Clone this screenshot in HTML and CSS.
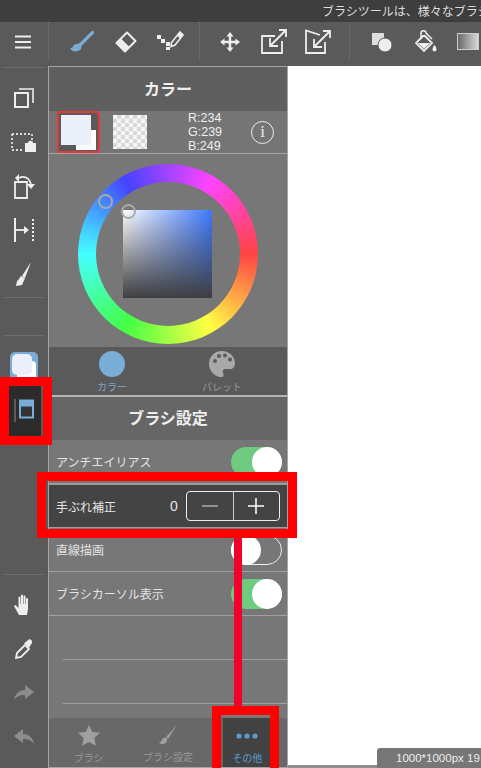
FILE: index.html
```html
<!DOCTYPE html>
<html lang="ja">
<head>
    <meta charset="UTF-8">
    <meta name="viewport" content="width=device-width, initial-scale=1.0">
    <title>ブラシ設定</title>
    <link rel="stylesheet" href="styles.css">
</head>
<body>

    <div class="statusbar">ブラシツールは、様々なブラシを使って描くことができます</div>

    <div class="toolbar">
        <div class="tool-menu">
            <svg width="16" height="14" viewBox="0 0 16 14"><path d="M0 1.500h16M0 7h16M0 12.500h16" stroke="#eee" stroke-width="2"/></svg>
        </div>
        <div class="tool-group group-a">
            <div class="tool">
                <svg width="24" height="22" viewBox="0 0 24 22"><path d="M22.500 1.500 10 14" stroke="#79add8" stroke-width="3.200" stroke-linecap="round"/><path d="M9 13c-3-.5-5 .5-6 2.500-.5 1-1.500 1.800-3 2 2 3.500 8 4 10.500 1 1.500-2 1.500-4.500-1.500-5.500z" fill="#79add8"/></svg>
            </div>
            <div class="tool">
                <svg width="24" height="24" viewBox="0 0 24 24"><path d="M13 2.500 21.500 11 11 21.500 2.500 13z" fill="none" stroke="#eee" stroke-width="2" stroke-linejoin="round"/><path d="M7 8.500 15.500 17 11 21.500 2.500 13z" fill="#eee"/></svg>
            </div>
            <div class="tool">
                <svg width="28" height="24" viewBox="0 0 28 24"><path d="M1 5h4v4H1zM5 9h4v4H5zM10 12h4v4h-4zM10 17h4v3h-4z" fill="#eee"/><path d="M24 2l3 3-8 10-4 1.500 .5-4z" fill="none" stroke="#eee" stroke-width="1.600"/><path d="M24 2l3 3-3 3.500-3-3z" fill="#eee"/></svg>
            </div>
        </div>
        <div class="tool-group group-b">
            <div class="tool">
                <svg width="20" height="20" viewBox="0 0 20 20"><path d="M10 2v16M2 10h16" stroke="#eee" stroke-width="2.400"/><path d="M10 0l3.500 4.500h-7zM10 20l3.500-4.500h-7zM0 10l4.500-3.500v7zM20 10l-4.500-3.500v7z" fill="#eee"/></svg>
            </div>
            <div class="tool">
                <svg width="26" height="25" viewBox="0 0 26 25"><path d="M14 7H1v17h20V12" fill="none" stroke="#eee" stroke-width="1.800"/><path d="M25 1 9.500 16.500M9 9v8h8M18 1h7v7" fill="none" stroke="#eee" stroke-width="1.800"/></svg>
            </div>
            <div class="tool">
                <svg width="26" height="25" viewBox="0 0 26 25"><path d="M15 6 1 1.500V24h19V13" fill="none" stroke="#eee" stroke-width="1.800"/><path d="M24 3 9.500 17.500M9 10v8h8M18 2h7v7" fill="none" stroke="#eee" stroke-width="1.800"/></svg>
            </div>
        </div>
        <div class="tool-group group-c">
            <div class="tool">
                <svg width="20" height="20" viewBox="0 0 20 20"><path d="M0 1h12v12H0z" fill="#ddd"/><circle cx="13" cy="13" r="7" fill="#eee" stroke="#5a5a5a"/></svg>
            </div>
            <div class="tool">
                <svg width="22" height="25" viewBox="0 0 22 25"><path d="M8 7 1 14l8 8 8-8-7-7z" fill="none" stroke="#eee" stroke-width="1.800"/><path d="M3 14h12l-6 6z" fill="#eee"/><path d="M6 10V4c0-3 5-3 5 0l6 6" fill="none" stroke="#eee" stroke-width="1.500"/><path d="M19.500 16c1.500 2 2 3 2 4.500a2 2 0 0 1-4 0c0-1.500.5-2.500 2-4.500z" fill="#eee"/></svg>
            </div>
            <div class="tool">
                <div class="gradient-icon"></div>
            </div>
        </div>
    </div>

    <div class="main">
        <div class="sidebar">
            <div class="side-line"></div>
            <div class="side-item first">
                <svg width="20" height="20" viewBox="0 0 20 20"><path d="M1 5h13v14H1z" fill="none" stroke="#eee" stroke-width="2"/><path d="M5 1h14v14" fill="none" stroke="#eee" stroke-width="1.600"/></svg>
            </div>
            <div class="side-item">
                <svg width="26" height="20" viewBox="0 0 26 20"><path d="M1 2h20M1 18h12M1 2v16M21 2v6" fill="none" stroke="#ddd" stroke-width="1.800" stroke-dasharray="2 2"/><path d="M14 11h11v9H14z" fill="#eee"/><path d="M17 11c0-3 5-3 5 0" fill="#eee"/></svg>
            </div>
            <div class="side-item">
                <svg width="22" height="26" viewBox="0 0 22 26"><path d="M2 9h12v16H2z" fill="none" stroke="#eee" stroke-width="1.800"/><path d="M6 5c5-3 11 0 12 7" fill="none" stroke="#eee" stroke-width="1.800"/><path d="M6 1v8l-4-4zM14 11h8l-4 5z" fill="#eee"/></svg>
            </div>
            <div class="side-item">
                <svg width="22" height="24" viewBox="0 0 22 24"><path d="M2 0v24" stroke="#eee" stroke-width="2"/><path d="M2 12h11" stroke="#eee" stroke-width="1.800"/><path d="M16 12l-5-4v8z" fill="#eee"/><path d="M20 1v22" stroke="#eee" stroke-width="2" stroke-dasharray="2 2"/></svg>
            </div>
            <div class="side-item">
                <svg width="16" height="24" viewBox="0 0 16 24"><path d="M15 0 6 14l3 2z" fill="#eee"/><path d="M5 14c-2 2-2 4-4 5l-1 5 6-1 3-7z" fill="#eee"/></svg>
            </div>
            <div class="side-line line-b"></div>
            <div class="side-line line-c"></div>
            <div class="layer-thumb">
                <div class="layer-front"></div>
                <div class="layer-back"></div>
            </div>
            <div class="panel-btn">
                <svg width="20" height="23" viewBox="0 0 20 23"><path d="M1 0v23" stroke="#8b8b8b" stroke-width="1"/><path d="M6 1.500h13v17H6z" fill="#333" stroke="#79add8" stroke-width="2"/><path d="M6 1.500h13v6H6z" fill="#79add8"/></svg>
            </div>
            <div class="side-spacer"></div>
            <div class="side-line"></div>
            <div class="side-item hand">
                <svg width="20" height="22" viewBox="0 0 20 22"><path d="M5 21 0 12l1.500-1 3 3V3.500a1 1 0 0 1 2 0V10h.5V1.500a1 1 0 0 1 2 0V10h.5V2.500a1 1 0 0 1 2 0V10h.5V5a1 1 0 0 1 2 0v10l-1 6z" fill="#eee"/></svg>
            </div>
            <div class="side-item">
                <svg width="18" height="20" viewBox="0 0 18 20"><path d="M10 6 2 14l-1 5 5-1 8-8z" fill="none" stroke="#eee" stroke-width="1.800"/><path d="M9 4l5 5 1-2 2-3c1-2-2-5-4-3l-2 2z" fill="#eee"/></svg>
            </div>
            <div class="side-item">
                <svg width="20" height="16" viewBox="0 0 20 16"><path d="M11 0l9 7-9 7v-4C6 10 3 11 0 15c1-6 5-10 11-10z" fill="#8d8d8d"/></svg>
            </div>
            <div class="side-item">
                <svg width="20" height="16" viewBox="0 0 20 16"><path d="M9 0 0 7l9 7v-4c5 0 8 1 11 5-1-6-5-10-11-10z" fill="#8d8d8d"/></svg>
            </div>
        </div>

        <div class="panel">
            <div class="panel-title color-title">カラー</div>
            <div class="swatch-row">
                <div class="swatch-frame">
                    <div class="swatch-back"></div>
                    <div class="swatch-main"></div>
                </div>
                <div class="swatch-clear"></div>
                <div class="rgb">R:234<br>G:239<br>B:249</div>
                <div class="info">i</div>
            </div>
            <div class="picker">
                <div class="wheel">
                    <div class="wheel-hole"></div>
                    <div class="square"></div>
                    <div class="ring hue-ring"></div>
                    <div class="ring sat-ring"></div>
                </div>
            </div>
            <div class="color-tabs">
                <div class="color-tab selected">
                    <div class="color-dot"></div>
                    <span>カラー</span>
                </div>
                <div class="color-tab">
                    <svg width="26" height="26" viewBox="0 0 26 26"><path d="M13 0C5 0 0 6 0 13s6 13 12 13c3 0 3-2 2-4s0-4 3-4h4c3 0 5-2 5-6 0-7-6-12-13-12z" fill="#a8a8a8"/><circle cx="6" cy="10" r="2" fill="#5a5a5a"/><circle cx="10" cy="5" r="2" fill="#5a5a5a"/><circle cx="16" cy="4.500" r="2" fill="#5a5a5a"/><circle cx="21" cy="8.500" r="2" fill="#5a5a5a"/></svg>
                    <span>パレット</span>
                </div>
            </div>

            <div class="panel-title brush-title">ブラシ設定</div>
            <div class="row">
                <span>アンチエイリアス</span>
                <div class="toggle on"><div class="knob"></div></div>
            </div>
            <div class="row row-dark">
                <span class="row-label">手ぶれ補正</span>
                <span class="row-value">0</span>
                <div class="stepper">
                    <div class="step">
                        <svg width="16" height="2" viewBox="0 0 16 2"><path d="M0 1h16" stroke="#aaa" stroke-width="1.500"/></svg>
                    </div>
                    <div class="step step-plus">
                        <svg width="16" height="16" viewBox="0 0 16 16"><path d="M0 8h16M8 0v16" stroke="#fff" stroke-width="1.500"/></svg>
                    </div>
                </div>
            </div>
            <div class="row">
                <span>直線描画</span>
                <div class="toggle off"><div class="knob"></div></div>
            </div>
            <div class="row">
                <span>ブラシカーソル表示</span>
                <div class="toggle on"><div class="knob"></div></div>
            </div>
            <div class="row-empty"></div>
            <div class="row-empty"></div>
            <div class="panel-spacer"></div>
            <div class="brush-tabs">
                <div class="brush-tab">
                    <svg width="22" height="21" viewBox="0 0 22 21"><path d="M11 0l3.300 7 7.700.8-5.700 5.200 1.600 7.700L11 16.900l-6.900 3.800 1.600-7.700L0 7.800 7.700 7z" fill="#a0a0a0"/></svg>
                    <span>ブラシ</span>
                </div>
                <div class="brush-tab">
                    <svg width="18" height="20" viewBox="0 0 18 20"><path d="M18 0 7 12l2 2z" fill="#a0a0a0"/><path d="M6 12.500c-3 0-3 3-4 4L0 18c3 2 7 1 8-2 .5-1 0-3-2-3.500z" fill="#a0a0a0"/></svg>
                    <span>ブラシ設定</span>
                </div>
                <div class="brush-tab other">
                    <div class="other-inner">
                        <svg width="22" height="6" viewBox="0 0 22 6"><circle cx="3" cy="3" r="2.600" fill="#5b9bd0"/><circle cx="11" cy="3" r="2.600" fill="#5b9bd0"/><circle cx="19" cy="3" r="2.600" fill="#5b9bd0"/></svg>
                        <span>その他</span>
                    </div>
                </div>
            </div>
        </div>

        <div class="canvas">
            <div class="canvas-info">1000*1000px 19</div>
        </div>
    </div>

    <!-- red marks drawn over the screenshot -->
    <div class="mark mark-side"></div>
    <div class="mark mark-row"></div>
    <div class="mark-line"></div>
    <div class="mark mark-tab"></div>

</body>
</html>
```

FILE: styles.css
```css
* {
    margin: 0;
    padding: 0;
    box-sizing: border-box;
}

body {
    width: 481px;
    height: 768px;
    overflow: hidden;
    position: relative;
    display: flex;
    flex-direction: column;
    font-family: "Noto Sans CJK JP", "Liberation Sans", sans-serif;
    background-color: #5a5a5a;
    color: #eee;
}

.statusbar {
    height: 22px;
    flex: none;
    padding-left: 322px;
    background-color: #3e3e3e;
    font-size: 12px;
    line-height: 22px;
    white-space: nowrap;
    overflow: hidden;
    color: #ddd;
}

.toolbar {
    height: 44px;
    flex: none;
    display: flex;
    background-color: #5a5a5a;
}

.tool-menu {
    width: 49px;
    height: 39px;
    flex: none;
    display: flex;
    align-items: center;
    justify-content: center;
    border-right: 1px solid #6a6a6a;
    padding-right: 3px;
}

.tool-group {
    display: flex;
    flex: none;
    height: 39px;
    border-right: 1px solid #6a6a6a;
}

.group-a {
    width: 151px;
    padding-left: 11px;
}

.group-b {
    width: 150px;
    padding-left: 8px;
}

.group-c {
    width: 131px;
    padding-left: 10px;
    border-right: none;
    overflow: hidden;
}

.tool {
    width: 44px;
    flex: none;
    display: flex;
    align-items: center;
    justify-content: center;
}

.gradient-icon {
    width: 22px;
    height: 17px;
    flex: none;
    margin-right: 4px;
    border: 1px solid #ccc;
    background: linear-gradient(to right, #6a6a6a, #d8d8d8);
}

.main {
    flex: 1;
    display: flex;
    min-height: 0;
}

.sidebar {
    width: 48px;
    flex: none;
    display: flex;
    flex-direction: column;
    align-items: center;
    padding-top: 1px;
    padding-bottom: 9px;
}

.side-line {
    width: 40px;
    height: 1px;
    flex: none;
    background-color: #6e6e6e;
}

.line-b {
    margin-top: 1px;
}

.line-c {
    margin-top: 37px;
}

.side-item {
    height: 44px;
    flex: none;
    display: flex;
    align-items: center;
    justify-content: center;
}

.first {
    margin-top: 8px;
}

.hand {
    margin-top: 8px;
}

.layer-thumb {
    width: 28px;
    height: 30px;
    flex: none;
    position: relative;
    margin-top: 16px;
    border-radius: 5px;
    background-color: #79add8;
}

.layer-front {
    width: 20px;
    height: 21px;
    position: absolute;
    left: 2px;
    top: 2px;
    border-radius: 5px;
    background-color: #eaeff9;
    z-index: 1;
}

.layer-back {
    width: 19px;
    height: 20px;
    position: absolute;
    right: 2px;
    top: 9px;
    border-radius: 4px;
    background-color: #fff;
}

.panel-btn {
    width: 34px;
    height: 51px;
    flex: none;
    margin-top: 4px;
    display: flex;
    align-items: center;
    justify-content: center;
    padding-bottom: 2px;
    background-color: #2b2b2b;
}

.side-spacer {
    flex: 1;
}

.panel {
    width: 240px;
    flex: none;
    display: flex;
    flex-direction: column;
    background-color: #777;
    border-left: 1px solid #a5a5a5;
    border-right: 1px solid #a5a5a5;
    border-top: 1px solid #a5a5a5;
}

.panel-title {
    flex: none;
    text-align: center;
    font-weight: 700;
    font-size: 16px;
    background-color: #5f5f5f;
}

.color-title {
    height: 44px;
    line-height: 42px;
}

.brush-title {
    height: 45px;
    line-height: 41px;
    background-color: #666;
    border-top: 2px solid #b5b5b5;
}

.swatch-row {
    height: 43px;
    flex: none;
    display: flex;
    align-items: center;
    padding-left: 8px;
    background-color: #757575;
    border-bottom: 1px solid #a5a5a5;
}

.swatch-frame {
    width: 43px;
    height: 42px;
    flex: none;
    position: relative;
    border: 2px solid #e0383c;
    border-radius: 3px;
    background-color: #5a5a5a;
}

.swatch-main {
    width: 30px;
    height: 30px;
    position: absolute;
    left: 2px;
    top: 2px;
    background-color: #eaeff9;
}

.swatch-back {
    width: 20px;
    height: 20px;
    position: absolute;
    left: 17px;
    top: 17px;
    background-color: #fff;
}

.swatch-clear {
    width: 34px;
    height: 34px;
    flex: none;
    margin-left: 13px;
    background-color: #f6f6f6;
    background-image: conic-gradient(#d8d8d8 25%, transparent 25% 50%, #d8d8d8 50% 75%, transparent 75%);
    background-size: 8px 8px;
}

.rgb {
    margin-left: 41px;
    width: 63px;
    flex: none;
    font-family: "Liberation Sans", sans-serif;
    font-size: 12.500px;
    line-height: 14px;
}

.info {
    width: 23px;
    height: 23px;
    flex: none;
    border: 1.500px solid #eee;
    border-radius: 50%;
    text-align: center;
    font-family: "Liberation Serif", serif;
    font-size: 17px;
    line-height: 20px;
}

.picker {
    height: 193px;
    flex: none;
    display: flex;
    justify-content: center;
    align-items: center;
    padding-top: 6px;
    background-color: #777;
}

.wheel {
    width: 180px;
    height: 180px;
    position: relative;
    border-radius: 50%;
    background: conic-gradient(from 30deg, #ff44ff, #ff4444 60deg, #ffff44 120deg, #44ff44 180deg, #44ffff 240deg, #4444ff 300deg, #ff44ff 360deg);
}

.wheel-hole {
    width: 144px;
    height: 144px;
    position: absolute;
    left: 18px;
    top: 18px;
    border-radius: 50%;
    background-color: #777;
}

.square {
    width: 89px;
    height: 88px;
    position: absolute;
    left: 45px;
    top: 46px;
    background: linear-gradient(to bottom, transparent, #3f3f42), linear-gradient(to right, #fff, #3c78ff);
}

.ring {
    width: 15px;
    height: 15px;
    position: absolute;
    border: 2px solid #aaa;
    border-radius: 50%;
}

.hue-ring {
    left: 20px;
    top: 30px;
}

.sat-ring {
    left: 43px;
    top: 40px;
}

.color-tabs {
    height: 48px;
    flex: none;
    display: flex;
    padding-left: 8px;
    background-color: #5a5a5a;
}

.color-tab {
    width: 110px;
    display: flex;
    flex-direction: column;
    align-items: center;
    padding-top: 4px;
    font-size: 10px;
    line-height: 14px;
    color: #999;
}

.color-tab span {
    margin-top: 3px;
}

.color-tab.selected {
    color: #7ea6c8;
}

.color-dot {
    width: 26px;
    height: 26px;
    border-radius: 50%;
    background-color: #79add8;
}

.row {
    height: 44px;
    flex: none;
    display: flex;
    align-items: center;
    justify-content: space-between;
    padding: 0 5px 0 7px;
    font-size: 12px;
    color: #e4e4e4;
    border-bottom: 1px solid #a0a0a0;
    background-color: #777;
}

.row-dark {
    justify-content: flex-start;
    background-color: #444;
    border-top: 1px solid #999;
}

.row-label {
    width: 114px;
    flex: none;
}

.row-value {
    width: 8px;
    flex: none;
    margin-right: 8px;
    font-family: "Liberation Sans", sans-serif;
    font-size: 14px;
}

.stepper {
    width: 94px;
    height: 30px;
    flex: none;
    display: flex;
    border: 1.500px solid #eee;
    border-radius: 4px;
}

.step {
    flex: 1;
    display: flex;
    align-items: center;
    justify-content: center;
}

.step-plus {
    border-left: 1.500px solid #ccc;
}

.toggle {
    width: 51px;
    height: 30px;
    flex: none;
    display: flex;
    border-radius: 16px;
}

.toggle.on {
    justify-content: flex-end;
    background-color: #6ecb80;
}

.toggle.off {
    border: 1.500px solid #eee;
}

.knob {
    width: 30px;
    height: 30px;
    flex: none;
    border-radius: 50%;
    background-color: #fff;
}

.toggle.off .knob {
    margin: -1px 0 0 -1px;
}

.row-empty {
    height: 44px;
    flex: none;
    margin-left: 14px;
    border-bottom: 1px solid #a0a0a0;
}

.panel-spacer {
    flex: 1;
}

.brush-tabs {
    height: 50px;
    flex: none;
    display: flex;
    background-color: #686868;
    border-bottom: 1px solid #a5a5a5;
}

.brush-tab {
    flex: 1;
    display: flex;
    flex-direction: column;
    align-items: center;
    padding-top: 7px;
    font-size: 10px;
    line-height: 14px;
    color: #999;
}

.brush-tab span {
    margin-top: 5px;
}

.brush-tab.other {
    padding-top: 0;
}

.other-inner {
    width: 48px;
    height: 100%;
    display: flex;
    flex-direction: column;
    align-items: center;
    padding-top: 15px;
    background-color: #424242;
    color: #5b9bd0;
}

.other-inner span {
    margin-top: 12px;
}

.canvas {
    flex: 1;
    position: relative;
    background-color: #fff;
    border-bottom: 3px solid #8f8f8f;
}

.canvas-info {
    position: absolute;
    right: 0;
    bottom: -3px;
    width: 104px;
    height: 20px;
    padding-left: 19px;
    border-top-left-radius: 3px;
    background-color: #777;
    font-family: "Liberation Sans", sans-serif;
    font-size: 11.500px;
    line-height: 20px;
    white-space: nowrap;
    overflow: hidden;
}

.mark {
    position: absolute;
    border: 9px solid #ff0000;
}

.mark-side {
    left: 0;
    top: 377px;
    width: 52px;
    height: 68px;
}

.mark-row {
    left: 37px;
    top: 472px;
    width: 260px;
    height: 66px;
}

.mark-tab {
    left: 212px;
    top: 706px;
    width: 67px;
    height: 71px;
}

.mark-line {
    position: absolute;
    left: 234px;
    top: 538px;
    width: 8px;
    height: 170px;
    background-color: #f5002d;
}
```
